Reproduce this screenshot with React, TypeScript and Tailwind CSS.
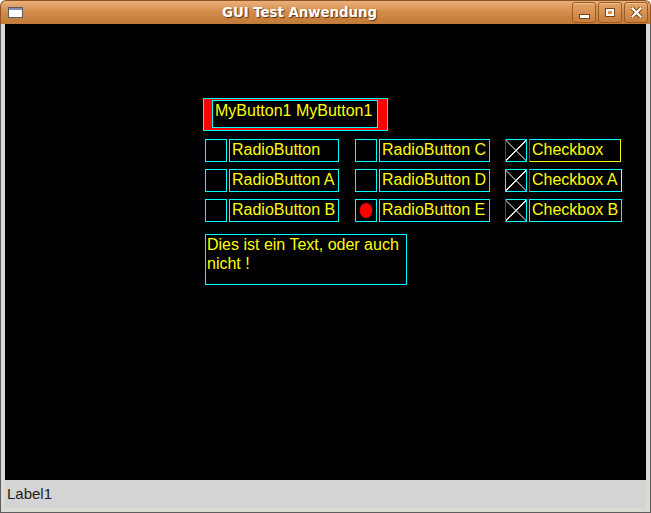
import type { ReactNode } from "react";

const CYAN = "border-[#00ffff]";

type Cell = {
  kind: "radio" | "check";
  checked?: boolean;
  label: string;
  labelWidth: string;
  boxBorder: string;
  labelBorder: string;
  gap: string;
};

const rows: Cell[][] = [
  [
    { kind: "radio", label: "RadioButton", labelWidth: "w-[110px]", boxBorder: CYAN, labelBorder: CYAN, gap: "" },
    { kind: "radio", label: "RadioButton C", labelWidth: "w-[111px]", boxBorder: CYAN, labelBorder: CYAN, gap: "ml-[16px]" },
    {
      kind: "check",
      label: "Checkbox",
      labelWidth: "w-[92px]",
      boxBorder: "border-[#00ffff] border-l-[#ff0000]",
      labelBorder: "border-t-[#00ffff] border-l-[#ff0000] border-r-[#ffff00] border-b-[#ffff00]",
      gap: "ml-[15px]",
    },
  ],
  [
    { kind: "radio", label: "RadioButton A", labelWidth: "w-[110px]", boxBorder: CYAN, labelBorder: CYAN, gap: "" },
    { kind: "radio", label: "RadioButton D", labelWidth: "w-[111px]", boxBorder: CYAN, labelBorder: CYAN, gap: "ml-[16px]" },
    {
      kind: "check",
      label: "Checkbox A",
      labelWidth: "w-[93px]",
      boxBorder: CYAN,
      labelBorder: "border-t-[#00ffff] border-l-[#ff0000] border-r-[#ffff00] border-b-[#00ffff]",
      gap: "ml-[15px]",
    },
  ],
  [
    { kind: "radio", label: "RadioButton B", labelWidth: "w-[110px]", boxBorder: CYAN, labelBorder: CYAN, gap: "" },
    { kind: "radio", checked: true, label: "RadioButton E", labelWidth: "w-[111px]", boxBorder: CYAN, labelBorder: CYAN, gap: "ml-[16px]" },
    {
      kind: "check",
      label: "Checkbox B",
      labelWidth: "w-[93px]",
      boxBorder: "border-[#00ffff] border-l-[#ff0000]",
      labelBorder: CYAN,
      gap: "ml-[15px]",
    },
  ],
];

function CrossMark() {
  return (
    <svg width="20" height="21" viewBox="0 0 20 21" shapeRendering="crispEdges">
      <line x1="0" y1="0" x2="20" y2="21" stroke="#808080" strokeWidth="1.4" />
      <line x1="20" y1="0" x2="0" y2="21" stroke="#e8e8e8" strokeWidth="1.4" />
    </svg>
  );
}

function RadioDot() {
  return (
    <svg width="14" height="17" viewBox="0 0 14 17">
      <ellipse cx="7" cy="8.5" rx="6.3" ry="7.6" fill="#ff0000" />
    </svg>
  );
}

function Widget({ cell }: { cell: Cell }) {
  return (
    <div className={`flex gap-[2px] ${cell.gap}`}>
      <div className={`w-[22px] h-[23px] border flex items-center justify-center ${cell.boxBorder}`}>
        {cell.kind === "check" && <CrossMark />}
        {cell.kind === "radio" && cell.checked && <RadioDot />}
      </div>
      <div className={`h-[23px] border pl-[2px] leading-[19px] whitespace-nowrap text-[#ffff00] ${cell.labelWidth} ${cell.labelBorder}`}>
        {cell.label}
      </div>
    </div>
  );
}

function WinButton({ children }: { children: ReactNode }) {
  return (
    <div className="w-[24px] h-[21px] rounded-[3px] border border-[#9a5a22] bg-gradient-to-b from-[#e3a468] to-[#c97f3c] shadow-[inset_0_1px_0_rgba(255,255,255,0.35)] flex items-center justify-center">
      {children}
    </div>
  );
}

function TitleBar() {
  return (
    <div className="h-[24px] flex items-center rounded-t-[6px] border border-b-0 border-[#8c5424] bg-gradient-to-b from-[#eab07a] via-[#d28a48] to-[#c27a3a]">
      <div className="ml-[7px] w-[15px] h-[11px] border border-[#5c5c5c] bg-white flex flex-col">
        <div className="h-[2px] bg-[#7d8fae]" />
      </div>
      <div className="flex-1 text-center text-white font-bold text-[13.3px] pl-[4px] font-['DejaVu_Sans',sans-serif] [text-shadow:1px_1px_1px_rgba(60,30,0,0.8)]">
        GUI Test Anwendung
      </div>
      <div className="flex gap-[2px] mr-[2px]">
        <WinButton>
          <div className="w-[9px] h-[3px] bg-white mt-[7px] border border-[#7a4515] box-content" />
        </WinButton>
        <WinButton>
          <div className="w-[8px] h-[7px] border-2 border-white outline outline-1 outline-[#7a4515]" />
        </WinButton>
        <WinButton>
          <svg width="11" height="11" viewBox="0 0 11 11">
            <path d="M1.5 1.5 L9.5 9.5 M9.5 1.5 L1.5 9.5" stroke="#7a4515" strokeWidth="4" strokeLinecap="square" />
            <path d="M1.5 1.5 L9.5 9.5 M9.5 1.5 L1.5 9.5" stroke="white" strokeWidth="2.2" strokeLinecap="square" />
          </svg>
        </WinButton>
      </div>
    </div>
  );
}

export default function App() {
  return (
    <div className="w-[651px] h-[513px] flex flex-col font-['Liberation_Sans',Arial,sans-serif] text-[16px]">
      <TitleBar />

      <div className="flex-1 flex flex-col border-x border-b border-[#5e5e5e] bg-[#dcdad5] px-[4px] pb-[4px]">
        <main className="flex-1 bg-black pl-[198px] pt-[74px]">
          <button className="w-[185px] h-[33px] border border-[#00ffff] bg-[#ff0000] pl-[8px] pt-px flex items-start">
            <span className="block w-[166px] h-[28px] border border-[#00ffff] bg-black text-[#ffff00] leading-[20px] text-left pl-[2px] whitespace-nowrap">
              MyButton1 MyButton1
            </span>
          </button>

          <div className="ml-[2px] mt-[8px] flex flex-col gap-[7px]">
            {rows.map((row, i) => (
              <div key={i} className="flex">
                {row.map((cell) => (
                  <Widget key={cell.label} cell={cell} />
                ))}
              </div>
            ))}
          </div>

          <p className="ml-[2px] mt-[12px] w-[202px] h-[51px] border border-[#00ffff] pl-px text-[#ffff00] leading-[19px]">
            Dies ist ein Text, oder auch nicht !
          </p>
        </main>

        <div className="h-[28px] bg-[#d4d4d4] pl-[2px] text-[15px] leading-[28px] text-[#1c1c1c]">Label1</div>
      </div>
    </div>
  );
}
